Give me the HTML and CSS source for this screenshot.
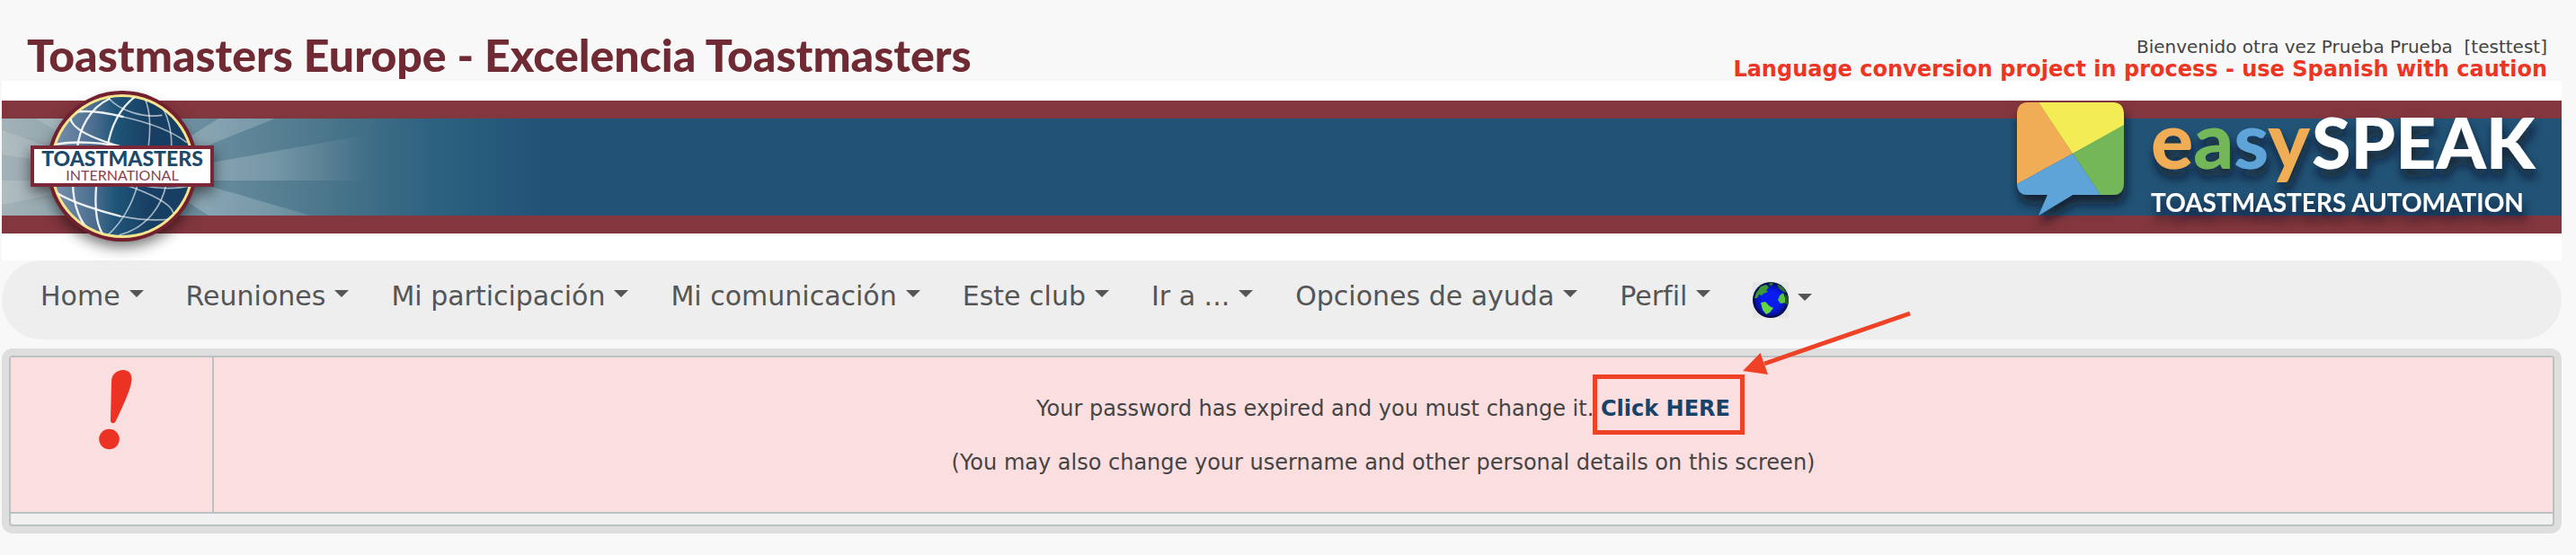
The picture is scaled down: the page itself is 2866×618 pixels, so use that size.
FILE: index.html
```html
<!DOCTYPE html>
<html lang="es">
<head>
<meta charset="utf-8">
<meta name="viewport" content="width=device-width, initial-scale=1">
<title>Toastmasters Europe - Excelencia Toastmasters</title>
<link rel="stylesheet" href="styles.css">
</head>
<body>
<header class="masthead">
  <h1 class="masthead-title">Toastmasters Europe - Excelencia Toastmasters</h1>
  <div class="masthead-user">
    <p class="welcome">Bienvenido otra vez Prueba Prueba&nbsp; [testtest]</p>
    <p class="notice">Language conversion project in process - use Spanish with caution</p>
  </div>
</header>

<div class="banner">
  <svg class="banner-left" viewBox="2 90 640 200" role="img" aria-label="Toastmasters International">
    <defs>
      <linearGradient id="fade" x1="0" x2="1" y1="0" y2="0">
        <stop offset="0" stop-color="#a3b2b7"/>
        <stop offset=".16" stop-color="#8aa0aa"/>
        <stop offset=".4" stop-color="#668b9d"/>
        <stop offset=".62" stop-color="#487489"/>
        <stop offset=".8" stop-color="#2d6280"/>
        <stop offset="1" stop-color="#215377"/>
      </linearGradient>
      <linearGradient id="ray" gradientUnits="userSpaceOnUse" x1="140" x2="410" y1="0" y2="0">
        <stop offset="0" stop-color="#fff" stop-opacity=".24"/>
        <stop offset=".6" stop-color="#fff" stop-opacity=".18"/>
        <stop offset="1" stop-color="#fff" stop-opacity="0"/>
      </linearGradient>
      <linearGradient id="sea" x1="0" x2="1" y1="0" y2="0">
        <stop offset="0" stop-color="#7791ac"/>
        <stop offset=".3" stop-color="#4a6d8f"/>
        <stop offset=".45" stop-color="#1f5578"/>
        <stop offset=".7" stop-color="#173f63"/>
        <stop offset="1" stop-color="#173f63"/>
      </linearGradient>
      <filter id="soft" x="-30%" y="-30%" width="160%" height="160%">
        <feGaussianBlur stdDeviation="8"/>
      </filter>
      <clipPath id="disc"><circle cx="136" cy="185" r="78"/></clipPath>
    </defs>
    <rect x="2" y="132" width="600" height="108" fill="url(#fade)"/>
    <g fill="url(#ray)">
      <path d="M140 198 420 148V201H140Z"/>
      <path d="M140 198 243 132H306Z"/>
      <path d="M140 180 345 240H232Z"/>
    </g>
    <g fill="#fff" fill-opacity=".14">
      <path d="M136 192 2 145V172Z"/>
      <path d="M136 201H2V228Z"/>
      <path d="M136 190 40 132H90Z"/>
    </g>
    <g filter="url(#soft)" opacity=".55">
      <circle cx="136" cy="193" r="82"/>
      <rect x="34" y="168" width="204" height="46"/>
    </g>
    <circle cx="136" cy="185" r="84" fill="#72202f"/>
    <circle cx="136" cy="185" r="80" fill="#f6e58c"/>
    <circle cx="136" cy="185" r="77" fill="url(#sea)"/>
    <g clip-path="url(#disc)">
      <g transform="translate(0 90) scale(.3333)" fill="none" stroke="#fff" stroke-linecap="round">
        <g stroke-width="7" stroke-opacity=".9">
          <path d="M235 125C240 165 330 200 420 225"/>
          <path d="M240 106C290 96 350 105 410 120"/>
          <path d="M190 212C250 200 350 205 420 225"/>
          <path d="M365 60C300 90 265 160 258 225"/>
          <path d="M455 50C400 90 370 150 358 225"/>
          <path d="M190 375C240 405 330 435 400 452"/>
          <path d="M243 345C245 420 270 480 305 505"/>
          <path d="M322 345C315 420 320 480 345 515"/>
        </g>
        <g stroke-width="5" stroke-opacity=".6">
          <path d="M410 120C500 140 570 165 622 205"/>
          <path d="M480 52C500 90 505 150 495 225"/>
          <path d="M530 70C560 110 575 170 572 225"/>
          <path d="M365 60C400 100 480 125 540 115"/>
          <path d="M400 452C470 466 530 468 585 460"/>
          <path d="M460 345C440 420 400 480 360 515"/>
          <path d="M555 345C540 420 490 490 400 515"/>
          <path d="M410 345C500 375 570 410 578 440"/>
          <path d="M460 345C530 365 600 360 635 350"/>
        </g>
      </g>
    </g>
    <rect x="36" y="164" width="200" height="42" fill="#fff" stroke="#7a2837" stroke-width="4"/>
    <text class="plate-name" x="136" y="185" text-anchor="middle">TOASTMASTERS</text>
    <text class="plate-sub" x="136" y="201" text-anchor="middle">INTERNATIONAL</text>
  </svg>

  <svg class="banner-right" viewBox="2230 90 620 200" role="img" aria-label="easySPEAK Toastmasters Automation">
    <defs>
      <filter id="drop" x="-10%" y="-20%" width="120%" height="150%">
        <feDropShadow dx="2" dy="10" stdDeviation="6" flood-color="#10151c" flood-opacity=".75"/>
      </filter>
      <clipPath id="bubble">
        <path d="M2256 114H2351Q2363 114 2363 128V203Q2363 217 2351 217H2306L2268 240 2278 217H2256Q2244 217 2244 203V128Q2244 114 2256 114Z"/>
      </clipPath>
    </defs>
    <g filter="url(#drop)">
      <g clip-path="url(#bubble)">
        <path fill="#f0ad57" d="M2244 114H2268L2306 171 2244 205Z"/>
        <path fill="#f3ec54" d="M2268 114H2363V140L2306 171Z"/>
        <path fill="#73b758" d="M2363 139V217H2337L2306 171Z"/>
        <path fill="#5ea4d9" d="M2244 205 2306 171 2337 217 2300 242H2244Z"/>
      </g>
    </g>
    <g filter="url(#drop)">
      <text class="brand-easy" x="2393" y="188"><tspan fill="#f0ad57">e</tspan><tspan fill="#73b758">a</tspan><tspan fill="#5ea4d9">s</tspan><tspan fill="#f0ad57">y</tspan></text>
      <text class="brand-speak" x="2572" y="188">SPEAK</text>
      <text class="brand-tag" x="2393" y="236">TOASTMASTERS AUTOMATION</text>
    </g>
  </svg>
</div>

<nav class="menu" aria-label="Principal">
  <button class="menu-item" type="button">Home<span class="caret"></span></button>
  <button class="menu-item" type="button">Reuniones<span class="caret"></span></button>
  <button class="menu-item" type="button">Mi participación<span class="caret"></span></button>
  <button class="menu-item" type="button">Mi comunicación<span class="caret"></span></button>
  <button class="menu-item" type="button">Este club<span class="caret"></span></button>
  <button class="menu-item" type="button">Ir a ...<span class="caret"></span></button>
  <button class="menu-item" type="button">Opciones de ayuda<span class="caret"></span></button>
  <button class="menu-item" type="button">Perfil<span class="caret"></span></button>
  <button class="menu-item menu-language" type="button" aria-label="Idioma">
    <svg class="world" viewBox="0 0 40 40" aria-hidden="true">
      <defs>
        <radialGradient id="ocean"><stop offset=".5" stop-color="#0a1cf0"/><stop offset=".8" stop-color="#0713a8"/><stop offset="1" stop-color="#050a30"/></radialGradient>
        <clipPath id="ball"><circle cx="20" cy="20" r="20"/></clipPath>
      </defs>
      <rect width="40" height="40" fill="#e6e6e6"/>
      <circle cx="20" cy="20" r="20" fill="url(#ocean)"/>
      <g clip-path="url(#ball)">
        <path fill="#3b9a35" d="M4 12 9 5 15 3 18 6 15 9 17 11 12 13 10 15 7 14 5 18 2 18Z"/>
        <path fill="#2a6d2c" d="M19 0 23 1 21 5 18 3ZM27 2 34 6 38 12 34 11 29 7Z"/>
        <path fill="#63d844" d="M9 23 14 22 19 27 23 29 19 34 15 36 11 31Z"/>
        <path fill="#56c43e" d="M30 15 34 12 36 18 36 23 31 24 28 20Z"/>
        <path fill="#1f5a22" d="M36 14 40 16V26L36 24Z"/>
      </g>
    </svg><span class="caret"></span>
  </button>
</nav>

<main class="panel">
  <table class="alert">
    <tbody>
      <tr>
        <td class="alert-icon">
          <svg class="bang" viewBox="100 408 48 96" role="img" aria-label="Aviso">
            <path fill="#eb3223" d="M124 425C124 417 130 412 137 412 144 412 147 417 146.500 423 146 432 138 450 128.500 469.500 127 472 123 472 123 468Z"/>
            <circle cx="121.500" cy="489" r="11.300" fill="#eb3223"/>
          </svg>
        </td>
        <td class="alert-text">
          <p>Your password has expired and you must change it. <a class="alert-link" href="#">Click HERE<span class="mark" aria-hidden="true"></span><svg class="pointer" viewBox="1942 345 190 76" aria-hidden="true"><path d="M2128 349 1966 405" stroke="#ee4126" stroke-width="5" fill="none"/><path d="M1942 413 1961.500 393 1970 417Z" fill="#ee4126"/></svg></a></p>
          <p>(You may also change your username and other personal details on this screen)</p>
        </td>
      </tr>
      <tr><td class="alert-foot" colspan="2"></td></tr>
    </tbody>
  </table>
</main>
</body>
</html>
```
FILE: styles.css
```css
* { box-sizing: border-box; }

body {
  margin: 0;
  padding: 0 16px 24px 2px;
  background: #f8f8f8;
  color: #444;
  font-family: "DejaVu Sans", Verdana, sans-serif;
  font-size: 24px;
}

h1, p { margin: 0; }

/* Page heading */
.masthead {
  display: flex;
  justify-content: space-between;
  align-items: flex-end;
  padding: 32px 16px 0 28px;
}

.masthead-title {
  color: #6f2a33;
  font: 900 50px/58px Lato, sans-serif;
}

.masthead-user { text-align: right; }
.welcome { font-size: 20px; line-height: 24px; }
.notice { color: #ee3524; font-weight: 700; line-height: 26px; }

/* Banner with the two logos */
.banner {
  display: flex;
  justify-content: space-between;
  background: linear-gradient(#fff 22px, #82363e 22px, #82363e 42px, #215377 42px, #215377 150px, #82363e 150px, #82363e 170px, #fff 170px);
}

.banner-left { width: 640px; height: 200px; }
.banner-right { width: 620px; height: 200px; }

.plate-name { font: 900 23px/1 Lato, sans-serif; fill: #1b4a6b; }
.plate-sub { font: 400 16px/1 Lato, sans-serif; fill: #8c3f50; }
.brand-easy { font: 900 88px Lato, sans-serif; }
.brand-speak { font: 900 79px Lato, sans-serif; fill: #fff; }
.brand-tag { font: 700 28px Lato, sans-serif; fill: #fff; }

/* Menu */
.menu {
  display: flex;
  align-items: flex-start;
  gap: 47px;
  padding: 20px 43px 24px;
  border-radius: 44px;
  background: #eee;
}

.menu-item {
  display: flex;
  align-items: center;
  gap: 10px;
  padding: 0;
  border: 0;
  background: none;
  color: #555;
  font: 400 30px/40px "DejaVu Sans", Verdana, sans-serif;
  white-space: nowrap;
  cursor: pointer;
}

.menu-language { padding-top: 4px; }
.world { width: 40px; height: 40px; }

.caret {
  margin-bottom: 6px;
  border: 8px solid transparent;
  border-top-color: #555;
  border-bottom: 0;
}

/* Alert */
.panel {
  margin-top: 10px;
  border: 8px solid #dedede;
  border-radius: 12px;
  background: #dedede;
}

.alert {
  width: 100%;
  border: 2px solid #b9c2c0;
  border-radius: 4px;
  border-spacing: 0;
  background: #f1f1f1;
}

.alert-icon {
  width: 226px;
  padding: 10px 0 0;
  border-right: 2px solid #b9c2c0;
  background: #fbdfe0;
  text-align: center;
  vertical-align: top;
}

.bang { width: 48px; height: 96px; }

.alert-text {
  padding: 42px 0 40px;
  background: #fbdfe0;
  line-height: 30px;
  text-align: center;
}

.alert-text p + p { margin-top: 30px; }

.alert-link {
  position: relative;
  display: inline-block;
  color: #16436a;
  font-weight: 700;
  text-decoration: none;
}

.mark {
  position: absolute;
  inset: -23px -16px -14px -9px;
  border: 5px solid #ee4126;
}

.pointer {
  position: absolute;
  top: -95px;
  left: calc(100% + 14px);
  width: 190px;
  height: 76px;
}

.alert-foot {
  height: 14px;
  padding: 0;
  border-top: 2px solid #b9c2c0;
}
```
